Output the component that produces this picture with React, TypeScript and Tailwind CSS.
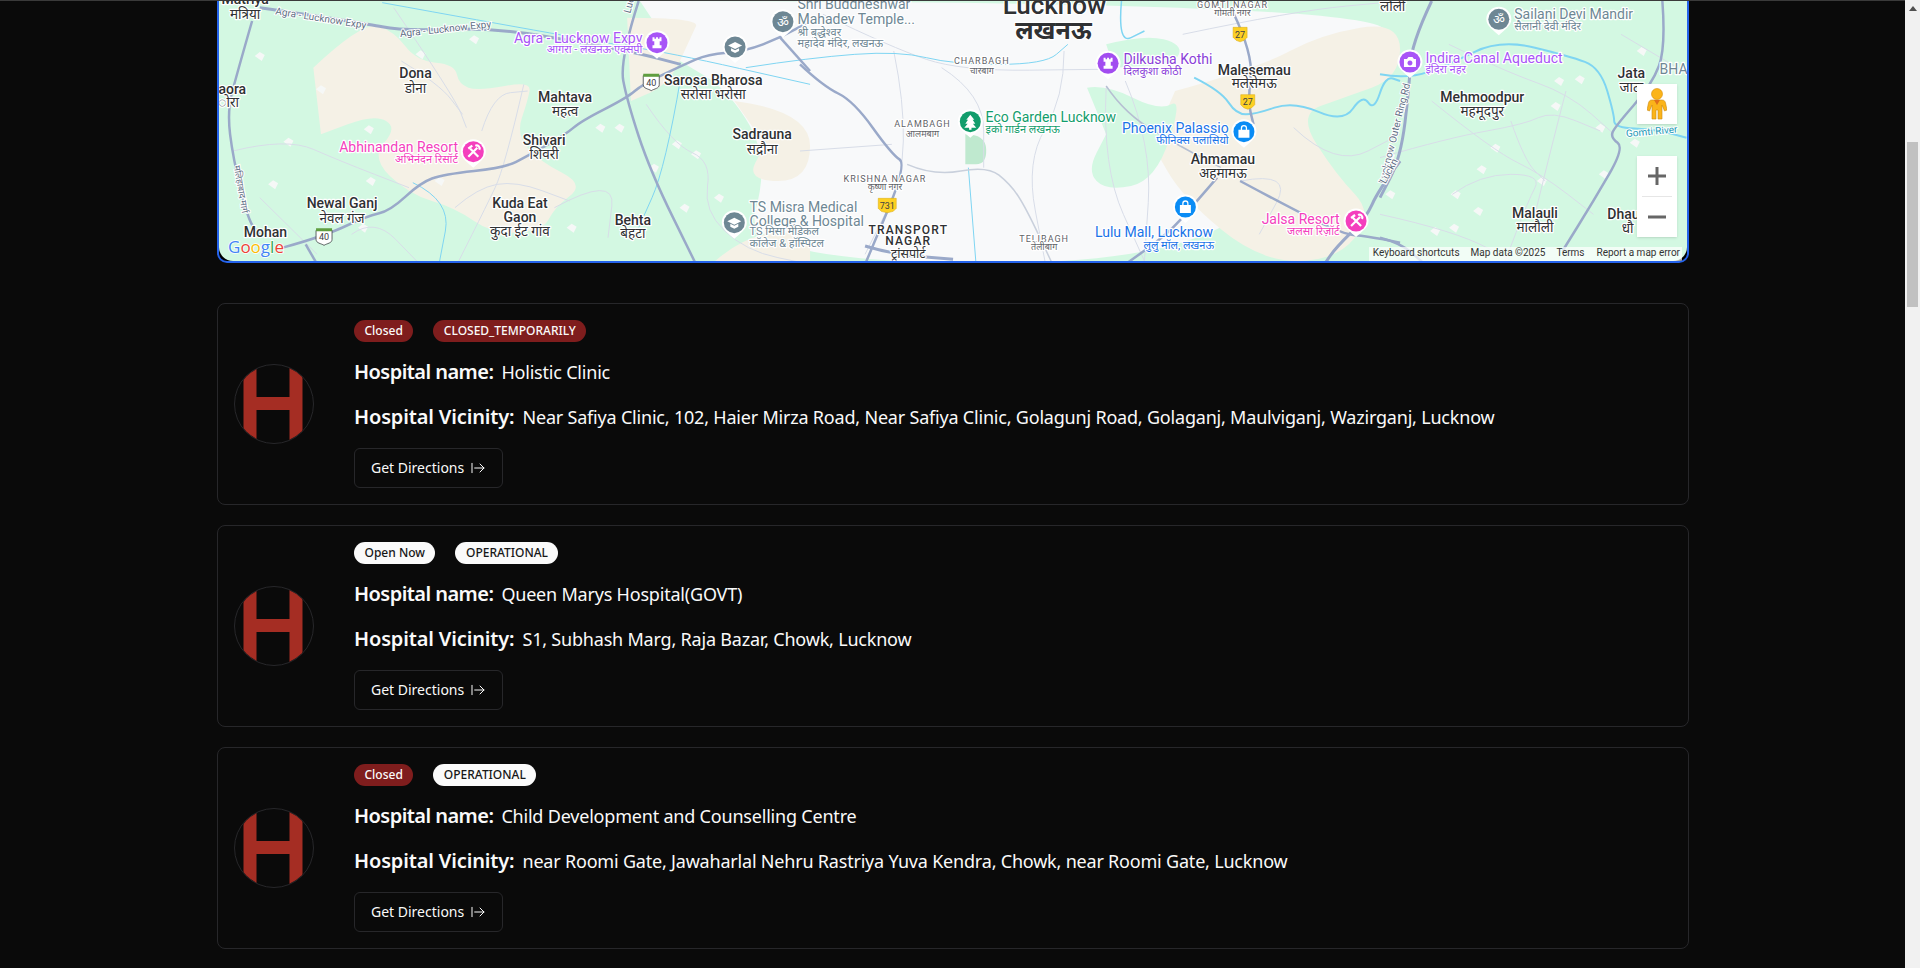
import { ArrowRightFromLine } from 'lucide-react'

type Point = [number, number]

// The map crops were read at different scales; these put them back into page pixels.
const a = (x: number, y: number): Point => [210 + x / 2.613, y / 3]
const b = (x: number, y: number): Point => [800 + x / 2.613, y / 3]
const c = (x: number, y: number): Point => [1380 + x / 2.904, y / 3]

// Rounds the corners of a point list so roads and rivers don't look faceted.
function smooth(pts: Point[]) {
  let d = `M${pts[0]}`
  for (let i = 1; i < pts.length - 1; i++) {
    const mid: Point = [(pts[i][0] + pts[i + 1][0]) / 2, (pts[i][1] + pts[i + 1][1]) / 2]
    d += `Q${pts[i]} ${mid}`
  }
  return `${d}L${pts[pts.length - 1]}`
}

const GREEN_LAND = '#d3f8e2'
const CITY = '#f8f9fa'
const TAN = '#f5f1e6'
const ROAD = '#9aa9c9'
const MINOR = '#d8dde8'
const WATER = '#7fd5f2'

const PURPLE = '#a855f7'
const PINK = '#f43fbd'
const GREY = '#6e8794'
const GREEN = '#129d6c'
const BLUE = '#0a8cf5'

const tanPatches: Point[][] = [
  [a(270, 200), a(400, 60), a(480, 90), a(540, 180), a(640, 190), a(650, 250), a(700, 270), a(840, 240), a(830, 300), a(800, 400), a(860, 480), a(980, 550), a(900, 620), a(870, 690), a(740, 700), a(640, 620), a(520, 580), a(420, 470), a(490, 380), a(430, 340), a(290, 400)],
  [a(1090, 50), a(1280, 50), a(1260, 100), a(1200, 250), a(1100, 300)],
  [a(1370, 300), a(1568, 330), a(1568, 540), a(1400, 540), a(1450, 430)],
  [b(980, 270), b(1200, 200), b(1360, 100), b(1568, 60), b(1568, 230), b(1420, 290), b(1300, 340), b(1400, 520), b(1500, 640), b(1400, 780), b(1200, 780), b(1000, 590), b(920, 430)],
  [a(1320, 780), a(1400, 700), a(1568, 690), a(1568, 790)],
]

const greenPatches: Point[][] = [
  [b(750, 260), b(800, 250), b(940, 330), b(1000, 290), b(930, 540), b(800, 570), b(750, 510), b(800, 400)],
  [b(432, 400), b(485, 400), b(488, 490), b(432, 490)],
  [b(800, 130), b(900, 100), b(1000, 130), b(980, 190), b(820, 200)],
]

const villages: Point[] = [
  a(205, 422), a(290, 265), a(165, 550), a(415, 385), a(550, 160), a(690, 115), a(1020, 380), a(1070, 380), a(1240, 620), a(1160, 500), a(1330, 590), a(945, 680), a(400, 680), a(130, 165), a(420, 540), a(600, 540), a(1220, 430), a(1270, 460),
  c(760, 150), c(580, 235), c(520, 240), c(510, 315), c(335, 440), c(295, 505), c(650, 520), c(470, 540), c(285, 630), c(215, 680), c(30, 580), c(580, 760), c(740, 425), c(640, 380), c(160, 690), c(220, 580), c(30, 465),
]

const roads: { pts: Point[]; w: number; color?: string }[] = [
  { pts: [a(130, 20), a(400, 65), a(500, 90), a(740, 80), a(1000, 130), a(1130, 160), a(1230, 190)], w: 3 },
  { pts: [a(190, 740), a(300, 705), a(410, 645), a(470, 630), a(550, 545), a(610, 520), a(770, 500), a(830, 465), a(930, 400), a(970, 360), a(1090, 290), a(1130, 250), a(1240, 190), a(1300, 160), a(1400, 150), a(1490, 110), a(1568, 60)], w: 2.5 },
  { pts: [a(110, 60), a(70, 220), a(45, 330), a(60, 470), a(100, 660), a(130, 700)], w: 2.5 },
  { pts: [a(250, 730), a(280, 790)], w: 2.5 },
  { pts: [a(1120, 0), a(1070, 180), a(1090, 300), a(1150, 510), a(1270, 790)], w: 2.5 },
  { pts: [a(1490, 110), a(1568, 210)], w: 2.5 },
  { pts: [b(0, 190), b(60, 255), b(140, 300), b(240, 460), b(280, 490), b(170, 790)], w: 2.5 },
  { pts: [b(280, 490), b(350, 525), b(490, 495), b(550, 550), b(590, 620), b(660, 790)], w: 1.5, color: '#c9d0dc' },
  { pts: [b(170, 735), b(240, 760), b(400, 775)], w: 3 },
  { pts: [b(1130, 30), b(1185, 160), b(1170, 300), b(1185, 370)], w: 2.5 },
  { pts: [b(1150, 540), b(1280, 620), b(1420, 700), b(1480, 705), b(1568, 725)], w: 2.5 },
  { pts: [b(1090, 530), b(1030, 610), b(960, 700), b(850, 790)], w: 2.5 },
  { pts: [b(1568, 480), b(1510, 570), b(1480, 650), b(1400, 740), b(1370, 790)], w: 3 },
  { pts: [c(150, 0), c(90, 130), c(85, 260), c(60, 470), c(0, 590)], w: 3 },
  { pts: [c(820, 0), c(830, 140), c(790, 250), c(680, 380), c(670, 410), c(710, 440), c(620, 600), c(530, 750)], w: 2.5 },
  { pts: [c(0, 710), c(60, 725), c(130, 790)], w: 2.5 },
  { pts: [b(800, 255), b(850, 340), b(1000, 440), b(1100, 500)], w: 1.5, color: '#b6bfd2' },
]

const minorRoads: Point[][] = [
  [a(480, 20), a(640, 290), a(670, 380)],
  [a(820, 250), a(770, 500), a(720, 620), a(650, 780)],
  [a(710, 390), a(740, 280), a(830, 270)],
  [a(60, 450), a(200, 410), a(340, 480), a(520, 560)],
  [a(130, 590), a(280, 760)],
  [a(1140, 310), a(1210, 430), a(1310, 480), a(1290, 630), a(1400, 750), a(1568, 790)],
  [a(900, 620), a(1060, 520), a(1040, 710)],
  [a(500, 180), a(600, 250), a(660, 340)],
  [a(640, 620), a(700, 560), a(800, 540), a(940, 600)],
  [a(370, 700), a(430, 650), a(540, 780)],
  [b(60, 40), b(240, 140), b(420, 210), b(780, 205)],
  [b(245, 150), b(300, 460), b(170, 760)],
  [b(370, 200), b(480, 280), b(480, 500)],
  [b(690, 150), b(690, 290), b(590, 480), b(640, 780)],
  [b(800, 260), b(790, 500), b(900, 780)],
  [b(850, 240), b(920, 430), b(900, 780)],
  [b(0, 450), b(240, 430)],
  [b(1000, 100), b(1290, 30), b(1568, 0)],
  [b(1290, 380), b(1400, 500), b(1568, 400)],
  [b(1150, 540), b(1290, 510), b(1200, 700)],
  [c(150, 300), c(330, 450), c(470, 520), c(620, 640)],
  [c(200, 130), c(360, 210), c(550, 280), c(680, 400)],
  [c(0, 470), c(200, 410), c(420, 370), c(500, 330), c(640, 390)],
  [c(210, 580), c(290, 520), c(470, 520), c(430, 600), c(360, 790)],
  [c(0, 640), c(220, 690), c(400, 790)],
  [c(700, 100), c(880, 210)],
  [c(380, 360), c(420, 480), c(480, 540)],
  [c(540, 270), c(500, 430), c(450, 640)],
]

const rivers: { pts: Point[]; w: number }[] = [
  { pts: [c(0, 220), c(80, 235), c(200, 190), c(350, 115), c(550, 165), c(640, 200), c(680, 340), c(680, 380), c(800, 385), c(890, 410)], w: 2 },
  { pts: [b(1030, 230), b(1100, 270), b(1140, 340), b(1190, 340), b(1290, 300), b(1420, 365), b(1470, 280), b(1500, 330), b(1530, 225), b(1568, 240)], w: 2 },
  { pts: [a(450, 5), a(1000, 120), a(1200, 155), a(1568, 250)], w: 1 },
  { pts: [a(1400, 200), a(1568, 170), b(260, 150), b(400, 190), b(640, 190), b(700, 130)], w: 1 },
  { pts: [b(840, 0), b(830, 130), b(900, 90)], w: 1.5 },
  { pts: [a(1230, 230), a(1190, 500), a(1120, 680)], w: 1 },
  { pts: [a(530, 545), a(630, 600), a(600, 780)], w: 1 },
  { pts: [b(440, 500), b(460, 790)], w: 1 },
]

type Label = {
  t: string
  p: Point
  size: number
  color?: string
  anchor?: 'start' | 'middle' | 'end'
  weight?: number
  spacing?: number
}

const DARK = '#2f3133'
const SUBURB = '#5f6368'
const TOWN = 14
const TOWN_HI = 13.5
const POI = 14
const POI_HI = 11

const town = (t: string, p: Point): Label => ({ t, p, size: TOWN, anchor: 'middle', color: DARK, weight: 500 })
const townHi = (t: string, p: Point): Label => ({ t, p, size: TOWN_HI, anchor: 'middle', color: DARK })
const suburb = (t: string, p: Point): Label => ({ t, p, size: 9, anchor: 'middle', color: SUBURB, spacing: 1 })
const suburbHi = (t: string, p: Point): Label => ({ t, p, size: 9, anchor: 'middle', color: SUBURB })

const labels: Label[] = [
  town('Matriya', a(92, 10)),
  townHi('मत्रिया', a(92, 55)),
  { t: 'aora', p: a(22, 278), size: TOWN, color: DARK, weight: 500 },
  { t: 'ोरा', p: a(22, 318), size: TOWN_HI, color: DARK },
  town('Dona', a(537, 232)),
  townHi('डोना', a(537, 275)),
  town('Mahtava', a(928, 302)),
  townHi('महत्व', a(928, 345)),
  town('Shivari', a(873, 433)),
  townHi('शिवरी', a(873, 475)),
  town('Newal Ganj', a(345, 622)),
  townHi('नेवल गंज', a(345, 665)),
  town('Mohan', a(145, 708)),
  town('Kuda Eat', a(810, 620)),
  town('Gaon', a(810, 662)),
  townHi('कुदा ईट गांव', a(810, 705)),
  town('Behta', a(1105, 672)),
  townHi('बेहटा', a(1105, 712)),
  town('Sarosa Bharosa', a(1315, 253)),
  townHi('सरोसा भरोसा', a(1315, 295)),
  town('Sadrauna', a(1443, 415)),
  townHi('सद्रौना', a(1443, 458)),

  { t: 'Agra - Lucknow Expv', p: a(1130, 125), size: POI, anchor: 'end', color: PURPLE },
  { t: 'आगरा - लखनऊ एक्सपी', p: a(1130, 155), size: POI_HI, anchor: 'end', color: PURPLE },
  { t: 'Abhinandan Resort', p: a(648, 452), size: POI, anchor: 'end', color: PINK },
  { t: 'अभिनंदन रिसॉर्ट', p: a(648, 487), size: POI_HI, anchor: 'end', color: PINK },
  { t: 'TS Misra Medical', p: a(1410, 632), size: POI, color: GREY },
  { t: 'College & Hospital', p: a(1410, 675), size: POI, color: GREY },
  { t: 'TS मिसा मेडिकल', p: a(1410, 703), size: POI_HI, color: GREY },
  { t: 'कॉलेज & हॉस्पिटल', p: a(1410, 738), size: POI_HI, color: GREY },
  { t: 'Shri Buddheshwar', p: a(1535, 25), size: POI, color: GREY },
  { t: 'Mahadev Temple...', p: a(1535, 68), size: POI, color: GREY },
  { t: 'श्री बुद्धेश्वर', p: a(1535, 105), size: POI_HI, color: GREY },
  { t: 'महादेव मंदिर, लखनऊ', p: a(1535, 137), size: POI_HI, color: GREY },

  { t: 'Lucknow', p: b(665, 38), size: 26, anchor: 'middle', color: DARK, weight: 500 },
  { t: 'लखनऊ', p: b(662, 115), size: 25, anchor: 'middle', color: DARK, weight: 700 },
  suburb('CHARBAGH', b(475, 190)),
  suburbHi('चारबाग', b(475, 218)),
  suburb('ALAMBAGH', b(320, 378)),
  suburbHi('आलमबाग', b(320, 407)),
  suburb('KRISHNA NAGAR', b(222, 542)),
  suburbHi('कृष्णा नगर', b(222, 568)),
  { t: 'TRANSPORT', p: b(283, 698), size: 12, anchor: 'middle', color: DARK, spacing: 1.2, weight: 500 },
  { t: 'NAGAR', p: b(283, 733), size: 12, anchor: 'middle', color: DARK, spacing: 1.2, weight: 500 },
  { t: 'ट्रांसपोर्ट', p: b(283, 770), size: 12.5, anchor: 'middle', color: DARK },
  suburb('TELIBAGH', b(638, 722)),
  suburbHi('तेलीबाग', b(638, 748)),
  suburb('GOMTI NAGAR', b(1130, 20)),
  suburbHi('गोमती नगर', b(1130, 45)),
  { t: 'Dilkusha Kothi', p: b(845, 190), size: POI, color: '#8b3fd9' },
  { t: 'दिलकुशा कोठी', p: b(845, 222), size: POI_HI, color: '#8b3fd9' },
  town('Malesemau', b(1187, 222)),
  townHi('मलेसेमऊ', b(1187, 262)),
  { t: 'Eco Garden Lucknow', p: b(485, 362), size: POI, color: GREEN },
  { t: 'इको गार्डन लखनऊ', p: b(485, 395), size: POI_HI, color: GREEN },
  { t: 'Phoenix Palassio', p: b(1120, 395), size: POI, anchor: 'end', color: '#1a73e8' },
  { t: 'फीनिक्स पलासियो', p: b(1120, 430), size: POI_HI, anchor: 'end', color: '#1a73e8' },
  town('Ahmamau', b(1105, 490)),
  townHi('अहमामऊ', b(1105, 530)),
  { t: 'Lulu Mall, Lucknow', p: b(925, 708), size: POI, anchor: 'middle', color: '#1a73e8' },
  { t: 'लुलु मॉल, लखनऊ', p: b(1082, 745), size: POI_HI, anchor: 'end', color: '#1a73e8' },
  { t: 'Jalsa Resort', p: b(1410, 668), size: POI, anchor: 'end', color: PINK },
  { t: 'जलसा रिज़ॉर्ट', p: b(1410, 703), size: POI_HI, anchor: 'end', color: PINK },

  { t: 'लौली', p: c(0, 30), size: TOWN_HI, color: DARK },
  { t: 'Sailani Devi Mandir', p: c(390, 55), size: POI, color: GREY },
  { t: 'सैलानी देवी मंदिर', p: c(390, 88), size: POI_HI, color: GREY },
  { t: 'Indira Canal Aqueduct', p: c(132, 185), size: POI, color: PURPLE },
  { t: 'इंदिरा नहर', p: c(132, 217), size: POI_HI, color: PURPLE },
  town('Jata', c(730, 230)),
  townHi('जाटा', c(730, 272)),
  { t: 'BHA', p: c(812, 220), size: POI, color: GREY },
  town('Mehmoodpur', c(297, 302)),
  townHi('महमूदपुर', c(297, 345)),
  town('Malauli', c(450, 650)),
  townHi('मालौली', c(450, 692)),
  { t: 'Dhau', p: c(660, 655), size: TOWN, color: DARK, weight: 500 },
  { t: 'धौ', p: c(702, 697), size: TOWN_HI, color: DARK },
]

const rotated: { t: string; p: Point; angle: number; color?: string; size?: number }[] = [
  { t: 'Agra - Lucknow Expy', p: a(170, 40), angle: 9, color: '#5f6f85', size: 10 },
  { t: 'Agra - Lucknow Expy', p: a(497, 108), angle: -6, color: '#5f6f85', size: 10 },
  { t: 'मलिहाबाद मार्ग', p: a(62, 495), angle: 80, color: '#5f6f85' },
  { t: 'Lucknow Outer Ring Rd', p: c(15, 550), angle: -76, color: '#5f6f85', size: 10 },
  { t: 'Gomti River', p: c(715, 408), angle: -5, color: '#1997b5', size: 10 },
  { t: 'Luck', p: a(1098, 38), angle: -75, color: '#5f6f85', size: 10 },
  { t: 'Luckn', p: b(1530, 550), angle: -62, color: '#5f6f85', size: 10 },
]

const pins: { p: Point; color: string; icon: string }[] = [
  { p: a(1168, 125), color: PURPLE, icon: 'rook' },
  { p: a(1372, 138), color: GREY, icon: 'cap' },
  { p: a(1497, 62), color: GREY, icon: 'om' },
  { p: a(688, 452), color: PINK, icon: 'tools' },
  { p: a(1370, 665), color: GREY, icon: 'cap' },
  { p: b(805, 187), color: '#a24df0', icon: 'rook' },
  { p: b(445, 362), color: GREEN, icon: 'tree' },
  { p: b(1160, 392), color: BLUE, icon: 'bag' },
  { p: b(1007, 618), color: BLUE, icon: 'bag' },
  { p: b(1453, 660), color: PINK, icon: 'tools' },
  { p: c(345, 55), color: GREY, icon: 'om' },
  { p: c(87, 183), color: PURPLE, icon: 'camera' },
]

const shields: { p: Point; t: string; kind: 'nh' | 'sh' }[] = [
  { p: a(1153, 242), t: '40', kind: 'nh' },
  { p: a(298, 706), t: '40', kind: 'nh' },
  { p: b(1150, 100), t: '27', kind: 'sh' },
  { p: b(1170, 302), t: '27', kind: 'sh' },
  { p: b(228, 613), t: '731', kind: 'sh' },
]

function PinIcon({ icon }: { icon: string }) {
  if (icon === 'rook') {
    return <path fill="#fff" d="M-4.5 -5.5h2v1.5h1.5v-1.5h2v1.5h1.5v-1.5h2v4h-1.8v4h1.8v3h-9v-3h1.8v-4h-1.8z" />
  }
  if (icon === 'cap') {
    return <path fill="#fff" d="M0 -5L7 -1.5L0 2L-7 -1.5zM-4 1.2L0 3.2L4 1.2V4L0 6L-4 4z" />
  }
  if (icon === 'om') {
    return (
      <text textAnchor="middle" y={5} fontSize={13} fill="#fff" fontFamily="'Noto Sans', 'DejaVu Sans', sans-serif">
        ॐ
      </text>
    )
  }
  if (icon === 'tools') {
    return <path stroke="#fff" strokeWidth={2.2} fill="none" d="M-5 5L4 -4M5 5L-3 -3M-5 -3L-1 -6M2 -6A3 3 0 0 1 6 -2" />
  }
  if (icon === 'tree') {
    return <path fill="#fff" d="M0 -7L4 -2H2.3L5 2H2.6L6 6H1.2V8H-1.2V6H-6L-2.6 2H-5L-2.3 -2H-4z" />
  }
  if (icon === 'bag') {
    return (
      <>
        <path fill="#fff" d="M-5.5 -2H5.5V6H-5.5z" />
        <path fill="none" stroke="#fff" strokeWidth={1.3} d="M-2.5 -1.5V-3.5A2.5 2.5 0 0 1 2.5 -3.5V-1.5" />
      </>
    )
  }
  return <path fill="#fff" fillRule="evenodd" d="M-6 -3H-3L-1.5 -5H2.5L4 -3H6V5H-6zM0 -1.5A2.5 2.5 0 1 0 0.01 -1.5z" />
}

function Pin({ p, color, icon }: { p: Point; color: string; icon: string }) {
  return (
    <g transform={`translate(${p[0]} ${p[1]})`}>
      <path fill="#fff" d="M-12.5 0A12.5 12.5 0 0 1 12.5 0C12.5 7 5 11 0 16C-5 11 -12.5 7 -12.5 0z" />
      <circle r={10.5} fill={color} />
      <PinIcon icon={icon} />
    </g>
  )
}

function Shield({ p, t, kind }: { p: Point; t: string; kind: 'nh' | 'sh' }) {
  if (kind === 'nh') {
    return (
      <g transform={`translate(${p[0]} ${p[1]})`}>
        <path fill="#fff" stroke="#3c4043" strokeWidth={0.8} d="M-8 -6H8V3C8 7 3 7 0 9C-3 7 -8 7 -8 3z" />
        <path fill="#5f9e3f" d="M-8 -8H8V-5H-8z" />
        <text textAnchor="middle" y={4} fontSize={9} fill="#3c4043" fontFamily="Roboto, sans-serif">
          {t}
        </text>
      </g>
    )
  }
  const half = t.length > 2 ? 9 : 7
  return (
    <g transform={`translate(${p[0]} ${p[1]})`}>
      <path fill="#fdd023" stroke="#d8a90f" strokeWidth={0.5} d={`M${-half} -7H${half}V3L${half - 3} 6L0 7.5L${3 - half} 6L${-half} 3z`} />
      <text textAnchor="middle" y={3.5} fontSize={9} fill="#3c4043" fontFamily="Roboto, sans-serif">
        {t}
      </text>
    </g>
  )
}

function MapDrawing() {
  return (
    <svg viewBox="219 0 1468 260" width={1468} height={260} className="block" fontFamily="Roboto, 'Noto Sans', 'DejaVu Sans', sans-serif">
      <rect x={219} y={0} width={1468} height={260} fill={GREEN_LAND} />
      <path fill={CITY} d={`${smooth([[640, 0], [1385, 0], [1385, 60], [1330, 40], [1300, 90], [1240, 262], [740, 262], [770, 160], [730, 90], [680, 60]])}Z`} />
      {tanPatches.map((pts, i) => (
        <path key={i} fill={TAN} d={`${smooth(pts)}Z`} />
      ))}
      {greenPatches.map((pts, i) => (
        <path key={i} fill={i === 1 ? '#bfe9cf' : GREEN_LAND} d={`${smooth(pts)}Z`} />
      ))}
      {villages.map((v, i) => (
        <path key={i} fill="#f6f8f7" d={`M${v[0] - 5} ${v[1]}L${v[0]} ${v[1] - 4}L${v[0] + 5} ${v[1] - 1}L${v[0] + 2} ${v[1] + 5}z`} />
      ))}
      {minorRoads.map((pts, i) => (
        <path key={i} fill="none" stroke={MINOR} strokeWidth={1} d={smooth(pts)} />
      ))}
      {rivers.map((r, i) => (
        <path key={i} fill="none" stroke={WATER} strokeWidth={r.w} d={smooth(r.pts)} />
      ))}
      {roads.map((r, i) => (
        <path key={i} fill="none" stroke={r.color ?? ROAD} strokeWidth={r.w} d={smooth(r.pts)} />
      ))}
      {rotated.map((l, i) => (
        <text
          key={i}
          transform={`translate(${l.p[0]} ${l.p[1]}) rotate(${l.angle})`}
          fontSize={l.size ?? 9}
          fill={l.color}
          stroke="#fff"
          strokeWidth={2}
          className="[paint-order:stroke]"
        >
          {l.t}
        </text>
      ))}
      {shields.map((s, i) => (
        <Shield key={i} {...s} />
      ))}
      {pins.map((pin, i) => (
        <Pin key={i} {...pin} />
      ))}
      {labels.map((l, i) => (
        <text
          key={i}
          x={l.p[0]}
          y={l.p[1]}
          fontSize={l.size}
          fill={l.color}
          fontWeight={l.weight ?? 400}
          textAnchor={l.anchor ?? 'start'}
          letterSpacing={l.spacing}
          stroke="#fff"
          strokeWidth={2.4}
          strokeLinejoin="round"
          className="[paint-order:stroke]"
        >
          {l.t}
        </text>
      ))}
      <text x={228} y={252} fontSize={17} fontFamily="'Open Sans', sans-serif" stroke="#fff" strokeWidth={1.5} className="[paint-order:stroke]">
        <tspan fill="#4285f4">G</tspan>
        <tspan fill="#ea4335">o</tspan>
        <tspan fill="#fbbc05">o</tspan>
        <tspan fill="#4285f4">g</tspan>
        <tspan fill="#34a853">l</tspan>
        <tspan fill="#ea4335">e</tspan>
      </text>
    </svg>
  )
}

function Pegman() {
  return (
    <svg viewBox="0 0 20 32" className="h-[32px] w-[20px]">
      <circle cx={10} cy={6} r={5.5} fill="#fbb41a" stroke="#d98e0a" strokeWidth={0.6} />
      <path fill="#fbb41a" stroke="#c98a12" strokeWidth={0.6} d="M5 12H15C17 12 18 13 18.5 15L20 22L17.5 23L15 17V31H11V22H9V31H5V17L2.5 23L0 22L1.5 15C2 13 3 12 5 12z" />
      <path fill="#e0701a" d="M7 12H13L10 17z" />
    </svg>
  )
}

function MapPanel() {
  return (
    <div className="relative h-[262px] overflow-hidden rounded-b-[10px] border-x-2 border-b-2 border-[#2563eb] bg-black">
      <div className="overflow-hidden rounded-b-[14px]">
        <MapDrawing />
      </div>
      <div className="absolute right-[10px] top-[83px] flex h-10 w-10 items-center justify-center bg-white shadow-sm">
        <Pegman />
      </div>
      <div className="absolute right-[10px] top-[155px] flex w-10 flex-col items-center bg-white shadow-sm">
        <div className="flex h-10 items-center justify-center text-[#666666]">
          <svg viewBox="0 0 18 18" className="h-[18px] w-[18px]" fill="currentColor">
            <path d="M7.5 0h3v7.5H18v3h-7.5V18h-3v-7.5H0v-3h7.5z" />
          </svg>
        </div>
        <div className="h-px w-[30px] bg-[#e6e6e6]" />
        <div className="flex h-10 items-center justify-center text-[#666666]">
          <svg viewBox="0 0 18 18" className="h-[18px] w-[18px]" fill="currentColor">
            <path d="M0 7.5h18v3H0z" />
          </svg>
        </div>
      </div>
      <div className="absolute bottom-0 right-[5px] flex h-[14px] items-start font-['Roboto',sans-serif] text-[10px] leading-[12px] text-[#333333]">
        <span className="h-full bg-white/70 pl-[4px] pr-[10px]">Keyboard shortcuts</span>
        <span className="h-full bg-white/70 pl-[1px] pr-[11px]">Map data ©2025</span>
        <span className="h-full bg-white/70 pr-[12px]">Terms</span>
        <span className="h-full bg-white/70 pr-[2px]">Report a map error</span>
      </div>
    </div>
  )
}

function HospitalLogo() {
  return (
    <div className="h-20 w-20 shrink-0 self-center overflow-hidden rounded-full border border-[#27272a] bg-[#0a0a0a]">
      <svg viewBox="0 0 78 78" className="h-full w-full">
        <path fill="#a52d23" d="M8.5 0H21.5V32H54.5V0H67.5V78H54.5V45H21.5V78H8.5z" />
      </svg>
    </div>
  )
}

function StatusBadge({ label, tone }: { label: string; tone: 'red' | 'white' }) {
  const toneClass = tone === 'red' ? 'bg-[#7f1d1d] text-[#fafafa]' : 'bg-[#fafafa] text-[#171717]'
  return (
    <span className={`inline-flex h-[22px] items-center rounded-full px-[10.5px] text-xs font-medium ${toneClass}`}>
      {label}
    </span>
  )
}

interface Hospital {
  open: string
  openTone: 'red' | 'white'
  status: string
  statusTone: 'red' | 'white'
  name: string
  vicinity: string
}

const hospitals: Hospital[] = [
  {
    open: 'Closed',
    openTone: 'red',
    status: 'CLOSED_TEMPORARILY',
    statusTone: 'red',
    name: 'Holistic Clinic',
    vicinity: 'Near Safiya Clinic, 102, Haier Mirza Road, Near Safiya Clinic, Golagunj Road, Golaganj, Maulviganj, Wazirganj, Lucknow',
  },
  {
    open: 'Open Now',
    openTone: 'white',
    status: 'OPERATIONAL',
    statusTone: 'white',
    name: 'Queen Marys Hospital(GOVT)',
    vicinity: 'S1, Subhash Marg, Raja Bazar, Chowk, Lucknow',
  },
  {
    open: 'Closed',
    openTone: 'red',
    status: 'OPERATIONAL',
    statusTone: 'white',
    name: 'Child Development and Counselling Centre',
    vicinity: 'near Roomi Gate, Jawaharlal Nehru Rastriya Yuva Kendra, Chowk, near Roomi Gate, Lucknow',
  },
]

function HospitalCard({ hospital }: { hospital: Hospital }) {
  return (
    <div className="flex h-[202px] gap-10 rounded-lg border border-[#27272a] p-4">
      <HospitalLogo />
      <div className="flex flex-col">
        <div className="flex gap-5">
          <StatusBadge label={hospital.open} tone={hospital.openTone} />
          <StatusBadge label={hospital.status} tone={hospital.statusTone} />
        </div>
        <div className="mt-[15px] flex h-[30px] items-center gap-2 text-[#fafafa]">
          <span className="text-[20px] font-semibold tracking-[-0.55px]">Hospital name:</span>
          <span className="text-[18px] tracking-[-0.2px]">{hospital.name}</span>
        </div>
        <div className="mt-[15px] flex h-[30px] items-center gap-2 text-[#fafafa]">
          <span className="text-[20px] font-semibold tracking-[-0.15px]">Hospital Vicinity:</span>
          <span className="text-[18px] tracking-[-0.2px]">{hospital.vicinity}</span>
        </div>
        <button
          type="button"
          className="mt-4 inline-flex h-10 w-[149px] items-center gap-[6px] whitespace-nowrap rounded-md border border-[#27272a] pl-4 text-sm text-[#fafafa]"
        >
          Get Directions
          <ArrowRightFromLine className="h-4 w-4 shrink-0" strokeWidth={1.5} />
        </button>
      </div>
    </div>
  )
}

export default function App() {
  return (
    <div className="flex h-[968px] overflow-hidden bg-[#0a0a0a] font-['Noto_Sans',sans-serif]">
      <div className="flex-1 border-t border-[#3a3a3a]">
        <main className="ml-[217px] w-[1472px]">
          <MapPanel />
          <div className="mt-[40px] flex flex-col gap-5">
            {hospitals.map((hospital) => (
              <HospitalCard key={hospital.name} hospital={hospital} />
            ))}
          </div>
        </main>
      </div>
      <div className="flex w-[15px] flex-col bg-[#f1f1f1]">
        <div className="flex h-[17px] items-center justify-center">
          <div className="h-0 w-0 border-x-[4px] border-b-[5px] border-x-transparent border-b-[#505050]" />
        </div>
        <div className="ml-[2px] mt-[125px] h-[165px] w-[11px] bg-[#c1c1c1]" />
      </div>
    </div>
  )
}
